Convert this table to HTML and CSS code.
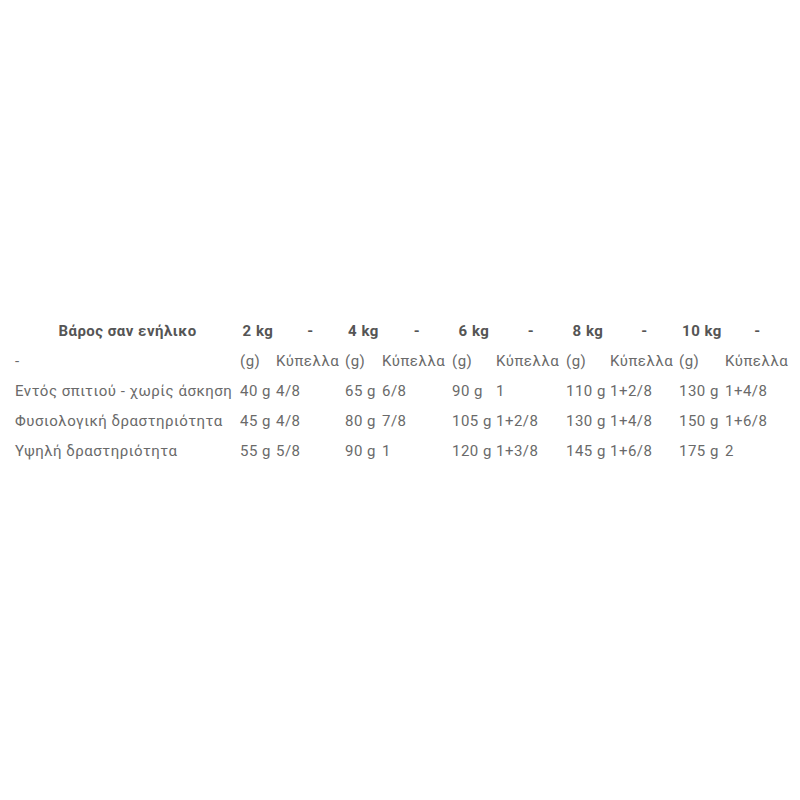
FILE: index.html
```html
<!DOCTYPE html>
<html lang="el">
<head>
<meta charset="utf-8">
<title>Βάρος σαν ενήλικο</title>
<link rel="stylesheet" href="styles.css">
</head>
<body>
<table class="feed">
  <colgroup>
    <col class="c-label">
    <col class="c-g1"><col class="c-b1">
    <col class="c-g2"><col class="c-b2">
    <col class="c-g3"><col class="c-b3">
    <col class="c-g4"><col class="c-b4">
    <col class="c-g5"><col class="c-b5">
  </colgroup>
  <thead>
    <tr>
      <th>Βάρος σαν ενήλικο</th>
      <th>2 kg</th><th>-</th>
      <th>4 kg</th><th>-</th>
      <th>6 kg</th><th>-</th>
      <th>8 kg</th><th>-</th>
      <th>10 kg</th><th>-</th>
    </tr>
  </thead>
  <tbody>
    <tr>
      <td>-</td>
      <td>(g)</td><td>Κύπελλα</td>
      <td>(g)</td><td>Κύπελλα</td>
      <td>(g)</td><td>Κύπελλα</td>
      <td>(g)</td><td>Κύπελλα</td>
      <td>(g)</td><td>Κύπελλα</td>
    </tr>
    <tr>
      <td>Εντός σπιτιού - χωρίς άσκηση</td>
      <td>40 g</td><td>4/8</td>
      <td>65 g</td><td>6/8</td>
      <td>90 g</td><td>1</td>
      <td>110 g</td><td>1+2/8</td>
      <td>130 g</td><td>1+4/8</td>
    </tr>
    <tr>
      <td>Φυσιολογική δραστηριότητα</td>
      <td>45 g</td><td>4/8</td>
      <td>80 g</td><td>7/8</td>
      <td>105 g</td><td>1+2/8</td>
      <td>130 g</td><td>1+4/8</td>
      <td>150 g</td><td>1+6/8</td>
    </tr>
    <tr>
      <td>Υψηλή δραστηριότητα</td>
      <td>55 g</td><td>5/8</td>
      <td>90 g</td><td>1</td>
      <td>120 g</td><td>1+3/8</td>
      <td>145 g</td><td>1+6/8</td>
      <td>175 g</td><td>2</td>
    </tr>
  </tbody>
</table>
</body>
</html>
```
FILE: styles.css
```css
html, body {
  margin: 0;
  padding: 0;
  background: #ffffff;
}

body {
  font-family: Roboto, "Noto Sans", "DejaVu Sans", sans-serif;
  font-size: 15px;
  letter-spacing: 0.5px;
  color: #6a6a6a;
}

.feed {
  margin: 316px 0 0 15px;
  border-collapse: collapse;
  border-spacing: 0;
  table-layout: fixed;
  width: 775px;
}

.feed th,
.feed td {
  padding: 0;
  height: 30px;
  line-height: 30px;
  white-space: nowrap;
  vertical-align: middle;
}

.feed th {
  font-weight: 700;
  color: #555555;
  text-align: center;
}

.feed td {
  text-align: left;
}

.c-label { width: 225px; }
.c-g1 { width: 36px; }
.c-b1 { width: 69px; }
.c-g2 { width: 37px; }
.c-b2 { width: 70px; }
.c-g3 { width: 44px; }
.c-b3 { width: 70px; }
.c-g4 { width: 44px; }
.c-b4 { width: 69px; }
.c-g5 { width: 46px; }
.c-b5 { width: 65px; }
```
